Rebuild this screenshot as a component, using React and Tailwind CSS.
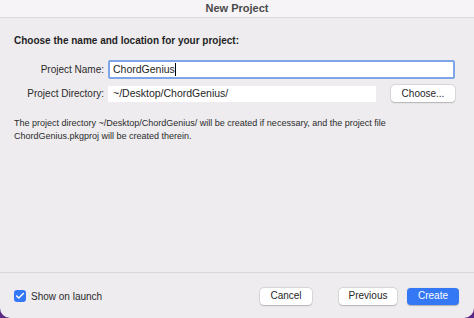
import { Check } from "lucide-react";

function MacButton({ children, primary, className = "" }) {
  return (
    <button
      className={`h-[17px] rounded-[4px] text-[10px] leading-none ${
        primary
          ? "bg-[#3478f6] text-white shadow-[0_0.5px_1px_rgba(0,0,0,0.25)]"
          : "bg-white text-[#262626] shadow-[0_0_0_0.5px_rgba(0,0,0,0.12),0_0.5px_1.5px_rgba(0,0,0,0.2)]"
      } ${className}`}
    >
      {children}
    </button>
  );
}

export default function App() {
  return (
    <div className="w-[474px] h-[318px] bg-[#5b2a86] font-['Liberation_Sans',sans-serif]">
      <div className="w-full h-full flex flex-col bg-[#eeecef] rounded-b-[10px] overflow-hidden">
        <div className="h-[18px] shrink-0 flex items-center justify-center bg-[#f6f4f7] border-b border-[#dcdadd]">
          <span className="text-[11px] font-bold text-[#4a4a4a]">New Project</span>
        </div>

        <div className="flex-1 flex flex-col px-[14px] pt-[18px]">
          <h1 className="text-[10px] font-bold text-[#1f1f1f] leading-none">
            Choose the name and location for your project:
          </h1>

          <div className="mt-[14px] grid grid-cols-[90px_1fr_auto] gap-x-[4px] gap-y-[6px] items-center pr-[5px]">
            <label className="text-right whitespace-nowrap text-[10px] text-[#2b2b2b]">Project Name:</label>
            <div className="col-span-2 h-[19px] bg-white border-2 border-[#7fa5e9] rounded-[2px] flex items-center pl-[3px] text-[10.5px] text-[#1f1f1f]">
              ChordGenius<span className="w-px h-[13px] bg-black" />
            </div>

            <label className="text-right whitespace-nowrap text-[10px] text-[#2b2b2b]">Project Directory:</label>
            <div className="h-[16px] bg-white flex items-center pl-[5px] text-[10.5px] text-[#1f1f1f] mr-[11px]">
              ~/Desktop/ChordGenius/
            </div>
            <MacButton className="w-[64px]">Choose...</MacButton>
          </div>

          <p className="mt-[15px] text-[9px] leading-[13px] text-[#2b2b2b]">
            The project directory ~/Desktop/ChordGenius/ will be created if necessary, and the project file
            <br />
            ChordGenius.pkgproj will be created therein.
          </p>
        </div>

        <div className="h-[46px] shrink-0 border-t border-[#d9d7da] flex items-center pl-[14px] pr-[15px] pt-[1px]">
          <div className="flex items-center gap-[5px]">
            <div className="w-[12px] h-[12px] rounded-[3px] bg-[#3478f6] flex items-center justify-center">
              <Check className="w-[10px] h-[10px] text-white" strokeWidth={3.5} />
            </div>
            <span className="text-[10px] text-[#2b2b2b]">Show on launch</span>
          </div>
          <div className="ml-auto flex items-center">
            <MacButton className="w-[52px]">Cancel</MacButton>
            <MacButton className="w-[58px] ml-[27px]">Previous</MacButton>
            <MacButton primary className="w-[52px] ml-[10px]">Create</MacButton>
          </div>
        </div>
      </div>
    </div>
  );
}
